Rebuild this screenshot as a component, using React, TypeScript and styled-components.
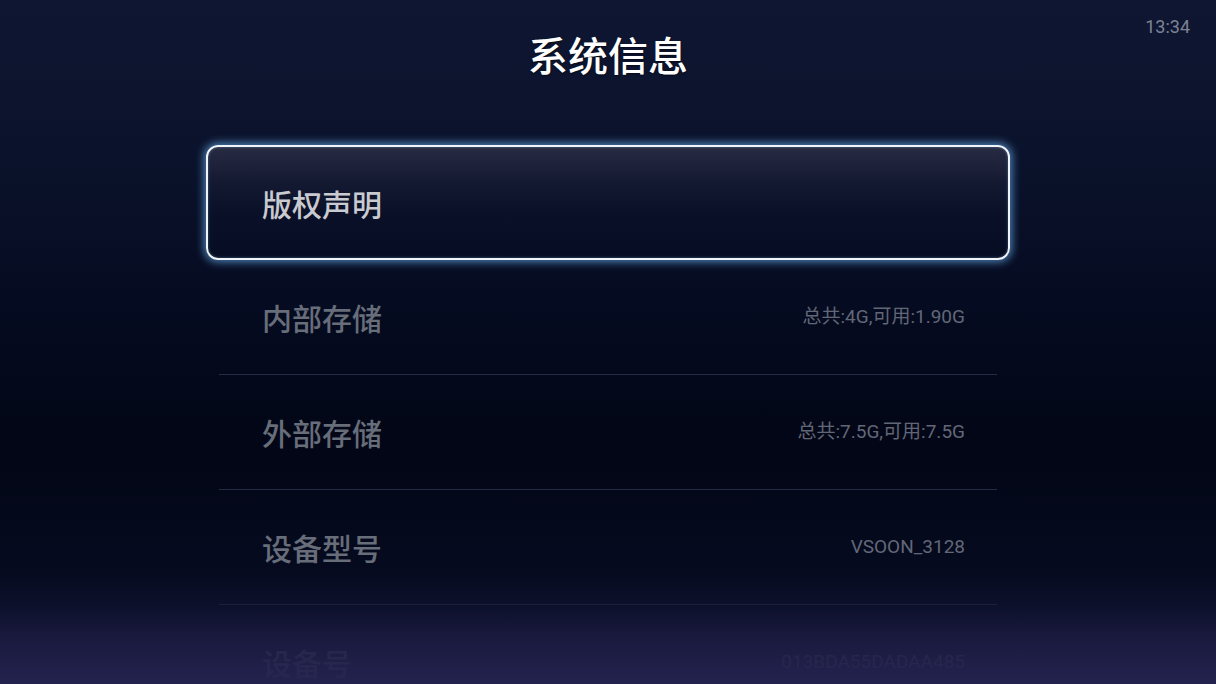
import React from "react";
import styled, { createGlobalStyle } from "styled-components";

const GlobalStyle = createGlobalStyle`
  html, body {
    margin: 0;
    padding: 0;
    background: #030818;
  }
  body {
    font-family: Roboto, "Noto Sans CJK SC", sans-serif;
  }
`;

const Screen = styled.div`
  position: relative;
  width: 1216px;
  height: 684px;
  overflow: hidden;
  display: flex;
  flex-direction: column;
  background: linear-gradient(
    180deg,
    #0f1632 0%,
    #0b132c 22%,
    #050b20 45%,
    #020616 65%,
    #050a1e 82%,
    #0c1029 100%
  );
`;

const Header = styled.header`
  flex-shrink: 0;
  display: grid;
  grid-template-columns: 1fr auto 1fr;
  height: 145px;
`;

const Title = styled.h1`
  grid-column: 2;
  margin: 35px 0 0;
  font-size: 40px;
  line-height: 46px;
  font-weight: 500;
  color: #ffffff;
  text-shadow: 0 1px 2px rgba(0, 0, 0, 0.6);
`;

const Clock = styled.span`
  grid-column: 3;
  justify-self: end;
  align-self: start;
  margin: 16px 26px 0 0;
  font-size: 18px;
  line-height: 22px;
  color: #7d8394;
`;

const List = styled.ul`
  flex-shrink: 0;
  list-style: none;
  margin: 0 auto;
  padding: 0;
  width: 778px;
`;

const Row = styled.li<{ $focused?: boolean }>`
  display: flex;
  align-items: center;
  justify-content: space-between;
  box-sizing: border-box;
  height: 115px;
  padding: 0 32px 0 43px;
  border-bottom: 1px solid #262a42;

  ${p =>
    p.$focused &&
    `
    margin: 0 -13px;
    padding: 0 44px 0 54px;
    border: 2px solid #eef4fa;
    border-radius: 12px;
    background: linear-gradient(180deg, #272b42 0%, #151a33 30%, #0a1028 60%, #060c22 100%);
    box-shadow: 0 0 8px 2px rgba(100, 170, 230, 0.75), inset 0 0 3px rgba(140, 190, 235, 0.45);
  `}
`;

const Label = styled.span<{ $focused?: boolean }>`
  font-family: "Noto Sans CJK SC", sans-serif;
  font-size: 30px;
  line-height: 36px;
  font-weight: 500;
  color: ${p => (p.$focused ? "#c9cacf" : "#686d7a")};
`;

const Value = styled.span`
  font-family: Roboto, "Noto Sans CJK SC", sans-serif;
  font-size: 19px;
  line-height: 24px;
  color: #626778;
`;

const BottomFade = styled.div`
  position: absolute;
  left: 0;
  right: 0;
  bottom: 0;
  height: 110px;
  pointer-events: none;
  background: linear-gradient(
    180deg,
    rgba(12, 14, 40, 0) 0%,
    rgba(18, 20, 52, 0.55) 30%,
    rgba(28, 28, 66, 0.86) 58%,
    rgba(36, 35, 80, 0.97) 100%
  );
`;

const items = [
  { label: "版权声明", value: "" },
  { label: "内部存储", value: "总共:4G,可用:1.90G" },
  { label: "外部存储", value: "总共:7.5G,可用:7.5G" },
  { label: "设备型号", value: "VSOON_3128" },
  { label: "设备号", value: "013BDA55DADAA485" },
];

export default function App() {
  const focusedIndex = 0;

  return (
    <>
      <GlobalStyle />
      <Screen>
        <Header>
          <Title>系统信息</Title>
          <Clock>13:34</Clock>
        </Header>
        <List>
          {items.map((item, index) => (
            <Row key={item.label} $focused={index === focusedIndex}>
              <Label $focused={index === focusedIndex}>{item.label}</Label>
              {item.value && <Value>{item.value}</Value>}
            </Row>
          ))}
        </List>
        <BottomFade />
      </Screen>
    </>
  );
}
